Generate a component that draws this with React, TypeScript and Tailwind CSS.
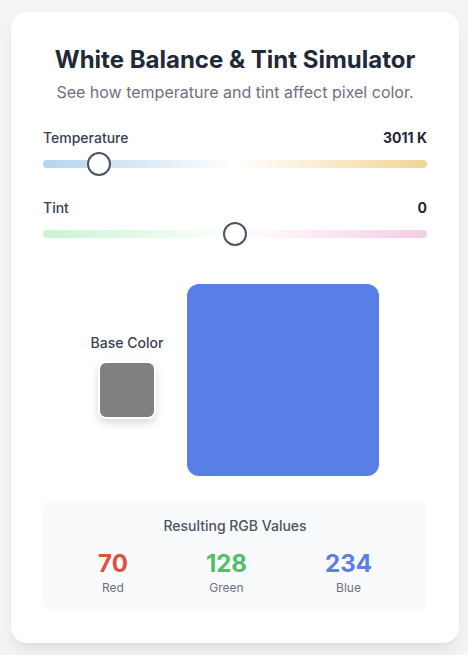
import React from 'react';

const font = { fontFamily: 'Inter, "Noto Sans", sans-serif' };

const Slider = ({ label, value, pos, track }: { label: string; value: string; pos: number; track: string }) => {
  return (
    <div>
      <div className="flex items-center justify-between text-sm leading-5">
        <span className="font-medium text-[#374151]">{label}</span>
        <span className="font-bold text-[#1f2937]">{value}</span>
      </div>
      <div className={`relative mt-3 h-2 rounded-full ${track}`}>
        <div
          className="absolute top-1/2 h-6 w-6 -translate-y-1/2 rounded-full border-2 border-[#4b5563] bg-white"
          style={{ left: `calc(${pos} * (100% - 24px))` }}
        />
      </div>
    </div>
  );
};

const Channel = ({ value, label, color }: { value: number; label: string; color: string }) => (
  <div className="flex flex-col items-center">
    <span className={`text-2xl font-bold leading-8 ${color}`}>{value}</span>
    <span className="text-xs leading-4 text-[#6b7280]">{label}</span>
  </div>
);

export default function App() {
  return (
    <div className="min-h-[655px] bg-[#f3f4f6] pt-3" style={font}>
      <div className="ml-[11px] w-[448px] rounded-2xl bg-white px-8 pt-8 pb-[32px] shadow-[0_10px_15px_-3px_rgba(0,0,0,0.08),0_4px_6px_-4px_rgba(0,0,0,0.06)]">
        <h1 className="text-center text-2xl font-bold leading-8 text-[#1f2937]">White Balance &amp; Tint Simulator</h1>
        <p className="mt-1 text-center text-base leading-6 text-[#6b7280]">See how temperature and tint affect pixel color.</p>

        <div className="mt-6">
          <Slider
            label="Temperature"
            value="3011 K"
            pos={0.122}
            track="bg-[linear-gradient(to_right,#b4d4ee,#ffffff_50%,#f2d595)]"
          />
        </div>
        <div className="mt-[30px]">
          <Slider
            label="Tint"
            value="0"
            pos={0.5}
            track="bg-[linear-gradient(to_right,#c8f4d2,#ffffff_50%,#f5cde5)]"
          />
        </div>

        <div className="mt-[46px] flex items-center justify-center gap-6">
          <div className="flex flex-col items-center pb-[9px]">
            <span className="text-sm font-medium leading-5 text-[#374151]">Base Color</span>
            <div className="mt-[8px] h-[58px] w-[58px] rounded-lg border-2 border-white bg-[#808080] shadow-[0_4px_8px_rgba(0,0,0,0.15)]" />
          </div>
          <div className="h-[192px] w-[192px] rounded-xl bg-[#587fe6]" />
        </div>

        <div className="mt-[25px] rounded-lg bg-[#f9fafb] px-4 pt-[15px] pb-[15px]">
          <p className="text-center text-sm leading-5 font-medium text-[#4b5563]">Resulting RGB Values</p>
          <div className="mt-3 flex justify-around">
            <Channel value={70} label="Red" color="text-[#de4f42]" />
            <Channel value={128} label="Green" color="text-[#50bf68]" />
            <Channel value={234} label="Blue" color="text-[#5a80e8]" />
          </div>
        </div>
      </div>
    </div>
  );
}
